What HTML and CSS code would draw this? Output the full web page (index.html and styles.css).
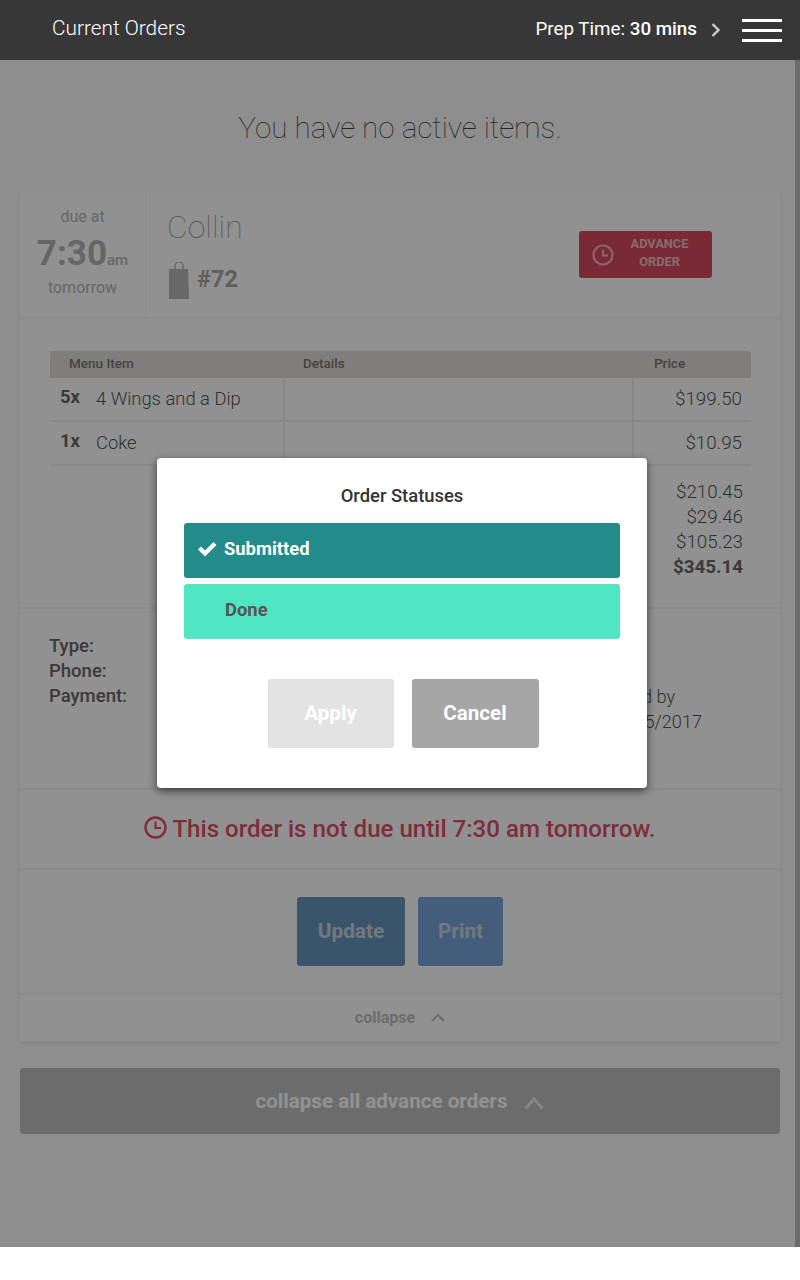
FILE: index.html
```html
<!DOCTYPE html>
<html lang="en">
<head>
  <meta charset="UTF-8" />
  <title>Current Orders</title>
  <link rel="stylesheet" href="styles.css">
</head>
<body>
  <div class="app">
    <!-- top bar -->
    <div class="topbar">
      <div class="topbar-title">Current Orders</div>
      <div class="prep-time">Prep Time: <strong>30 mins</strong></div>
      <svg class="prep-arrow" width="10" height="14" viewBox="0 0 10 14"><path d="M1.500 1l6 6-6 6" fill="none" stroke="#ccc" stroke-width="2.4"/></svg>
      <div class="burger"><span></span><span></span><span></span></div>
    </div>

    <div class="content">
      <div class="notice">You have no active items.</div>

      <div class="order-card">
        <div class="order-head">
          <div class="due">
            <div class="due-label">due at</div>
            <div class="due-time">7:30<span class="due-ampm">am</span></div>
            <div class="due-label">tomorrow</div>
          </div>
          <div class="customer">
            <div class="customer-name">Collin</div>
            <div class="customer-order">
              <svg width="24" height="38" viewBox="0 0 24 38"><path d="M8 8V4a4 4 0 0 1 8 0v4" fill="none" stroke="#b8b8b8" stroke-width="1.500"/><path d="M2 7h19l1 30H2z" fill="#b8b8b8"/></svg>
              <span>#72</span>
            </div>
          </div>
          <div class="advance-badge">
            <svg width="22" height="22" viewBox="0 0 22 22"><circle cx="11" cy="11" r="9.500" fill="none" stroke="#ecb4bc" stroke-width="2.200"/><path d="M11 5.500V11.500H16" fill="none" stroke="#ecb4bc" stroke-width="2"/></svg>
            <div class="advance-text">ADVANCE<br>ORDER</div>
          </div>
        </div>

        <div class="order-items">
          <table class="items">
            <thead>
              <tr><th class="col-item">Menu Item</th><th class="col-details">Details</th><th class="col-price">Price</th></tr>
            </thead>
            <tbody>
              <tr><td><b>5x</b>4 Wings and a Dip</td><td></td><td class="price">$199.50</td></tr>
              <tr><td><b>1x</b>Coke</td><td></td><td class="price">$10.95</td></tr>
            </tbody>
          </table>
          <div class="totals">
            <div>$210.45</div>
            <div>$29.46</div>
            <div>$105.23</div>
            <div class="grand">$345.14</div>
          </div>
        </div>

        <div class="order-info">
          <div class="info-labels">
            <div>Type:</div>
            <div>Phone:</div>
            <div>Payment:</div>
          </div>
          <div class="info-paid">
            <div>Paid by</div>
            <div>1/15/2017</div>
          </div>
        </div>

        <div class="order-alert">
          <svg width="23" height="23" viewBox="0 0 23 23"><circle cx="11.500" cy="11.500" r="10" fill="none" stroke="#e04f66" stroke-width="2.400"/><path d="M11.500 5.500V12H17" fill="none" stroke="#e04f66" stroke-width="2.200"/></svg>
          <span>This order is not due until 7:30 am tomorrow.</span>
        </div>

        <div class="order-actions">
          <div class="btn btn-update">Update</div>
          <div class="btn btn-print">Print</div>
        </div>

        <div class="order-collapse">
          <span>collapse</span>
          <svg width="14" height="10" viewBox="0 0 14 10"><path d="M1 9l6-6 6 6" fill="none" stroke="#c4c4c4" stroke-width="2.200"/></svg>
        </div>
      </div>

      <div class="collapse-all">
        <span>collapse all advance orders</span>
        <svg width="20" height="14" viewBox="0 0 20 14"><path d="M1.500 12.500L10 3l8.500 9.500" fill="none" stroke="#eee" stroke-width="3"/></svg>
      </div>
    </div>

    <div class="scrollbar"></div>
    <div class="overlay"></div>

    <!-- status popup -->
    <div class="modal">
      <div class="modal-title">Order Statuses</div>
      <div class="status status-current">
        <svg width="20" height="16" viewBox="0 0 20 16"><path d="M1 8.500l3-3 4 4L16.500 1l3 3L8 15.500z" fill="#fff"/></svg>
        <span>Submitted</span>
      </div>
      <div class="status status-next"><span>Done</span></div>
      <div class="modal-buttons">
        <div class="modal-btn modal-apply">Apply</div>
        <div class="modal-btn modal-cancel">Cancel</div>
      </div>
    </div>
  </div>
</body>
</html>
```

FILE: styles.css
```css
* {
  margin: 0;
  padding: 0;
  box-sizing: border-box;
  font-family: Roboto, sans-serif;
}

body {
  background-color: #fff;
}

.app {
  position: relative;
  height: 1247px;
  overflow: hidden;
  background-color: #fafafa;
}

/* top bar */
.topbar {
  position: relative;
  z-index: 3;
  height: 60px;
  background-color: #373737;
  color: #fff;
  display: flex;
  align-items: center;
  padding: 0 18px 2px 52px;
}

.topbar-title {
  flex: 1;
  font-size: 20.800px;
  font-weight: 300;
  margin-bottom: 2px;
}

.prep-time {
  font-size: 18.800px;
}

.prep-time strong {
  font-weight: 500;
}

.prep-arrow {
  margin: 2px 21px 0 14px;
}

.burger {
  width: 40px;
  display: flex;
  flex-direction: column;
  gap: 7px;
  margin-top: 2px;
}

.burger span {
  height: 3px;
  background-color: #fff;
}

.content {
  padding: 0 20px;
  width: 800px;
}

.notice {
  height: 131px;
  padding-top: 48px;
  text-align: center;
  font-size: 29.600px;
  font-weight: 100;
  color: #444;
  line-height: 40px;
}

.order-card {
  background-color: #fff;
  border-radius: 3px;
  box-shadow: 0 2px 4px rgba(0, 0, 0, 0.08);
}

.order-head {
  height: 128px;
  display: flex;
  border-bottom: 2px solid #f8f8f8;
}

.due {
  width: 127px;
  border-right: 2px solid #f8f8f8;
  text-align: center;
  padding-top: 15px;
}

.due-label {
  font-size: 16px;
  line-height: 22px;
  color: #b5b5b5;
}

.due-time {
  margin-top: 9px;
  font-size: 35px;
  font-weight: 700;
  color: #b3b3b3;
  line-height: 34px;
}

.due-ampm {
  font-size: 15px;
  font-weight: 500;
}

.customer {
  flex: 1;
  padding: 16px 0 0 20px;
}

.customer-name {
  font-size: 32px;
  font-weight: 100;
  color: #999;
  line-height: 40px;
}

.customer-order {
  display: flex;
  align-items: center;
  gap: 6px;
  margin-top: 15px;
  font-size: 23.500px;
  font-weight: 700;
  color: #a8a8a8;
}

.customer-order span {
  margin-bottom: 4px;
}

.advance-badge {
  width: 133px;
  height: 47px;
  margin: 40px 68px 0 0;
  background-color: #d64a5d;
  border-radius: 3px;
  display: flex;
  align-items: center;
  padding-left: 13px;
}

.advance-text {
  flex: 1;
  text-align: center;
  padding: 0 7px 4px 0;
  font-size: 12.800px;
  font-weight: 700;
  line-height: 18px;
  color: #ecc0c6;
}

.order-items {
  height: 290px;
  padding: 32px 29px 0 30px;
  border-bottom: 2px solid #f3f3f3;
}

.items {
  width: 701px;
  border-collapse: collapse;
  table-layout: fixed;
}

.items th {
  height: 27px;
  padding-bottom: 4px;
  background-color: #e0dedb;
  font-size: 13.500px;
  font-weight: 500;
  color: #777;
  text-align: left;
}

.items th:first-child {
  border-radius: 3px 0 0 0;
}

.items th:last-child {
  border-radius: 0 3px 0 0;
}

.col-item {
  width: 234px;
  padding-left: 19px;
}

.col-details {
  width: 349px;
  padding-left: 19px;
}

.col-price {
  padding-left: 21px;
}

.items td {
  height: 44px;
  padding: 0 9px 2px 10px;
  font-size: 18.400px;
  font-weight: 300;
  color: #555;
  border-bottom: 2px solid #efefef;
  border-left: 2px solid #efefef;
}

.items tbody tr:first-child td {
  height: 43px;
}

.items td:first-child {
  border-left: none;
}

.items td b {
  display: inline-block;
  width: 36px;
  font-weight: 700;
  color: #666;
  position: relative;
  top: -2px;
}

.items td.price {
  text-align: right;
  font-size: 18.800px;
  padding-bottom: 0;
}

.totals {
  margin-top: 14px;
  text-align: right;
  padding-right: 8px;
  font-size: 18.800px;
  font-weight: 300;
  line-height: 25px;
  color: #555;
}

.totals .grand {
  font-weight: 700;
  color: #666;
}

.order-info {
  height: 181px;
  padding: 25px 0 0 29px;
  border-bottom: 2px solid #f3f3f3;
  font-size: 18.200px;
  line-height: 25px;
  display: flex;
}

.info-labels {
  flex: 1;
  font-size: 18.500px;
  font-weight: 500;
  color: #666;
}

.info-paid {
  width: 163px;
  padding-top: 50px;
  font-weight: 300;
  color: #555;
}

.order-alert {
  height: 80px;
  border-bottom: 2px solid #f3f3f3;
  display: flex;
  align-items: center;
  justify-content: center;
  gap: 5px;
  font-size: 24.100px;
  font-weight: 500;
  color: #e04f66;
}

.order-alert svg {
  margin-bottom: 4px;
}

.order-actions {
  height: 125px;
  border-bottom: 2px solid #f3f3f3;
  display: flex;
  justify-content: center;
  gap: 13px;
  padding-top: 27px;
}

.btn {
  height: 69px;
  padding-bottom: 2px;
  border-radius: 3px;
  color: #c8d4e0;
  font-size: 20.800px;
  font-weight: 700;
  display: flex;
  align-items: center;
  justify-content: center;
}

.btn-update {
  width: 108px;
  background-color: #6594bc;
}

.btn-print {
  width: 85px;
  background-color: #78a4dc;
}

.order-collapse {
  height: 46px;
  padding-bottom: 2px;
  display: flex;
  align-items: center;
  justify-content: center;
  gap: 16px;
  font-size: 16px;
  font-weight: 700;
  color: #c0c0c0;
}

.collapse-all {
  height: 66px;
  margin-top: 27px;
  background-color: #bfbfbf;
  border-radius: 3px;
  display: flex;
  align-items: center;
  justify-content: center;
  gap: 17px;
  font-size: 20.600px;
  font-weight: 700;
  color: #fff;
}

.collapse-all svg {
  margin-top: 3px;
}

.scrollbar {
  position: absolute;
  top: 60px;
  right: 0;
  bottom: 0;
  width: 5px;
  background-color: #bfbfbf;
}

.overlay {
  position: absolute;
  top: 0;
  left: 0;
  right: 0;
  bottom: 0;
  z-index: 2;
  background-color: rgba(0, 0, 0, 0.43);
}

/* popup */
.modal {
  position: absolute;
  z-index: 4;
  top: 458px;
  left: 157px;
  width: 490px;
  height: 330px;
  padding: 27px;
  background-color: #fff;
  border-radius: 4px;
  box-shadow: 0 3px 9px rgba(0, 0, 0, 0.6);
}

.modal-title {
  text-align: center;
  font-size: 18.400px;
  font-weight: 500;
  color: #333;
  line-height: 22px;
  margin-bottom: 16px;
}

.status {
  height: 55px;
  border-radius: 3px;
  display: flex;
  align-items: center;
  font-size: 18.400px;
  font-weight: 700;
  padding: 0 0 4px 41px;
  margin-bottom: 6px;
}

.status-current {
  background-color: #238b89;
  color: #fff;
  padding-left: 13px;
  gap: 7px;
}

.status-next {
  background-color: #50e6c3;
  color: #555;
}

.modal-buttons {
  display: flex;
  justify-content: center;
  gap: 18px;
  margin-top: 40px;
  padding-left: 2px;
}

.modal-btn {
  height: 69px;
  padding-bottom: 2px;
  border-radius: 3px;
  color: #fff;
  font-size: 20.600px;
  font-weight: 700;
  display: flex;
  align-items: center;
  justify-content: center;
}

.modal-apply {
  width: 126px;
  background-color: #e3e3e3;
}

.modal-cancel {
  width: 127px;
  background-color: #a6a6a6;
}
```
